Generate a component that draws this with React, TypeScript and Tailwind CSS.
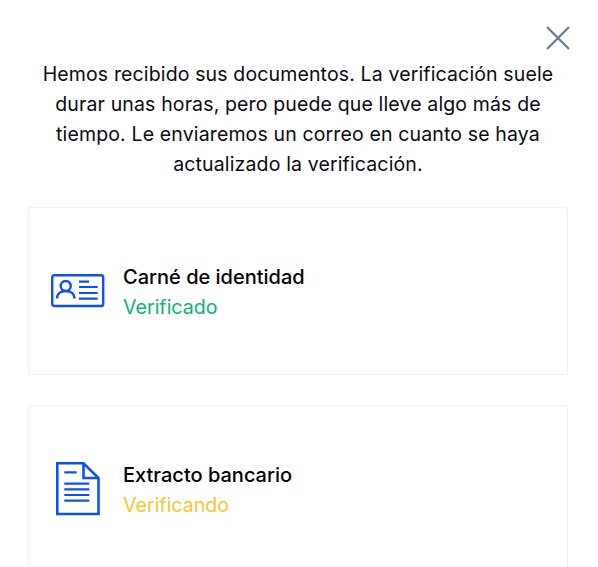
import React from 'react';

function IdIcon() {
  return (
    <svg width="54" height="34" viewBox="0 0 54 34" fill="none" stroke="#0f50f5" strokeWidth="2.400">
      <rect x="1.200" y="1.200" width="51" height="30.800" rx="2" />
      <circle cx="14.700" cy="12" r="5" />
      <path d="M6 24.500c0-4.800 3.800-7.500 8.700-7.500s8.700 2.700 8.700 7.500" />
      <path d="M28 7.700h10M28 13h18.700M28 19h18.700M28 24.700h18.700" strokeWidth="2.200" />
    </svg>
  );
}

function DocIcon() {
  return (
    <svg width="44" height="54" viewBox="0 0 44 54" fill="none" stroke="#0f50f5" strokeWidth="2.600">
      <path d="M1.300 1.300h26.200l15 14.700v36H1.300z" />
      <path d="M27.500 1.300v14.700h15" />
      <path d="M8.300 10.300h12.400M8.300 21.700h25M8.300 27.300h25M8.300 33h25M8.300 38.700h25" strokeWidth="2.200" />
    </svg>
  );
}

function DocCard({ icon, title, status, statusClass, iconClass }: { icon: React.ReactNode; title: string; status: string; statusClass: string; iconClass: string }) {
  return (
    <div className="h-[168px] shrink-0 flex items-center border border-[#f0f0f0] rounded-[2px] pl-[22px]">
      <div className={iconClass}>{icon}</div>
      <div className="pt-[2px]">
        <div className="text-[20px] leading-[30px] font-medium text-black">{title}</div>
        <div className={`text-[19.600px] leading-[30px] ${statusClass}`}>{status}</div>
      </div>
    </div>
  );
}

export default function App() {
  return (
    <div className="h-[567px] overflow-hidden bg-white pl-[28px] pr-[30px] font-['Inter',sans-serif]">
      <div className="flex justify-end pt-[25px] h-[59px]">
        <svg width="26" height="26" viewBox="0 0 26 26" fill="none" stroke="#6b8093" strokeWidth="2.400" className="mr-[-3px]">
          <path d="M2 2l22 22M24 2L2 24" />
        </svg>
      </div>
      <p className="text-center text-[19.500px] leading-[30px] tracking-[0.14px] text-[#0a0a14] px-[6px]">
        Hemos recibido sus documentos. La verificación suele durar unas horas, pero puede que lleve algo más de tiempo. Le enviaremos un correo en cuanto se haya actualizado la verificación.
      </p>
      <div className="mt-[28px] flex flex-col gap-[30px]">
        <DocCard icon={<IdIcon />} title="Carné de identidad" status="Verificado" statusClass="text-[#12b07a]" iconClass="mr-[18px]" />
        <DocCard icon={<DocIcon />} title="Extracto bancario" status="Verificando" statusClass="text-[#fbc531]" iconClass="ml-[5px] mr-[23px]" />
      </div>
    </div>
  );
}
